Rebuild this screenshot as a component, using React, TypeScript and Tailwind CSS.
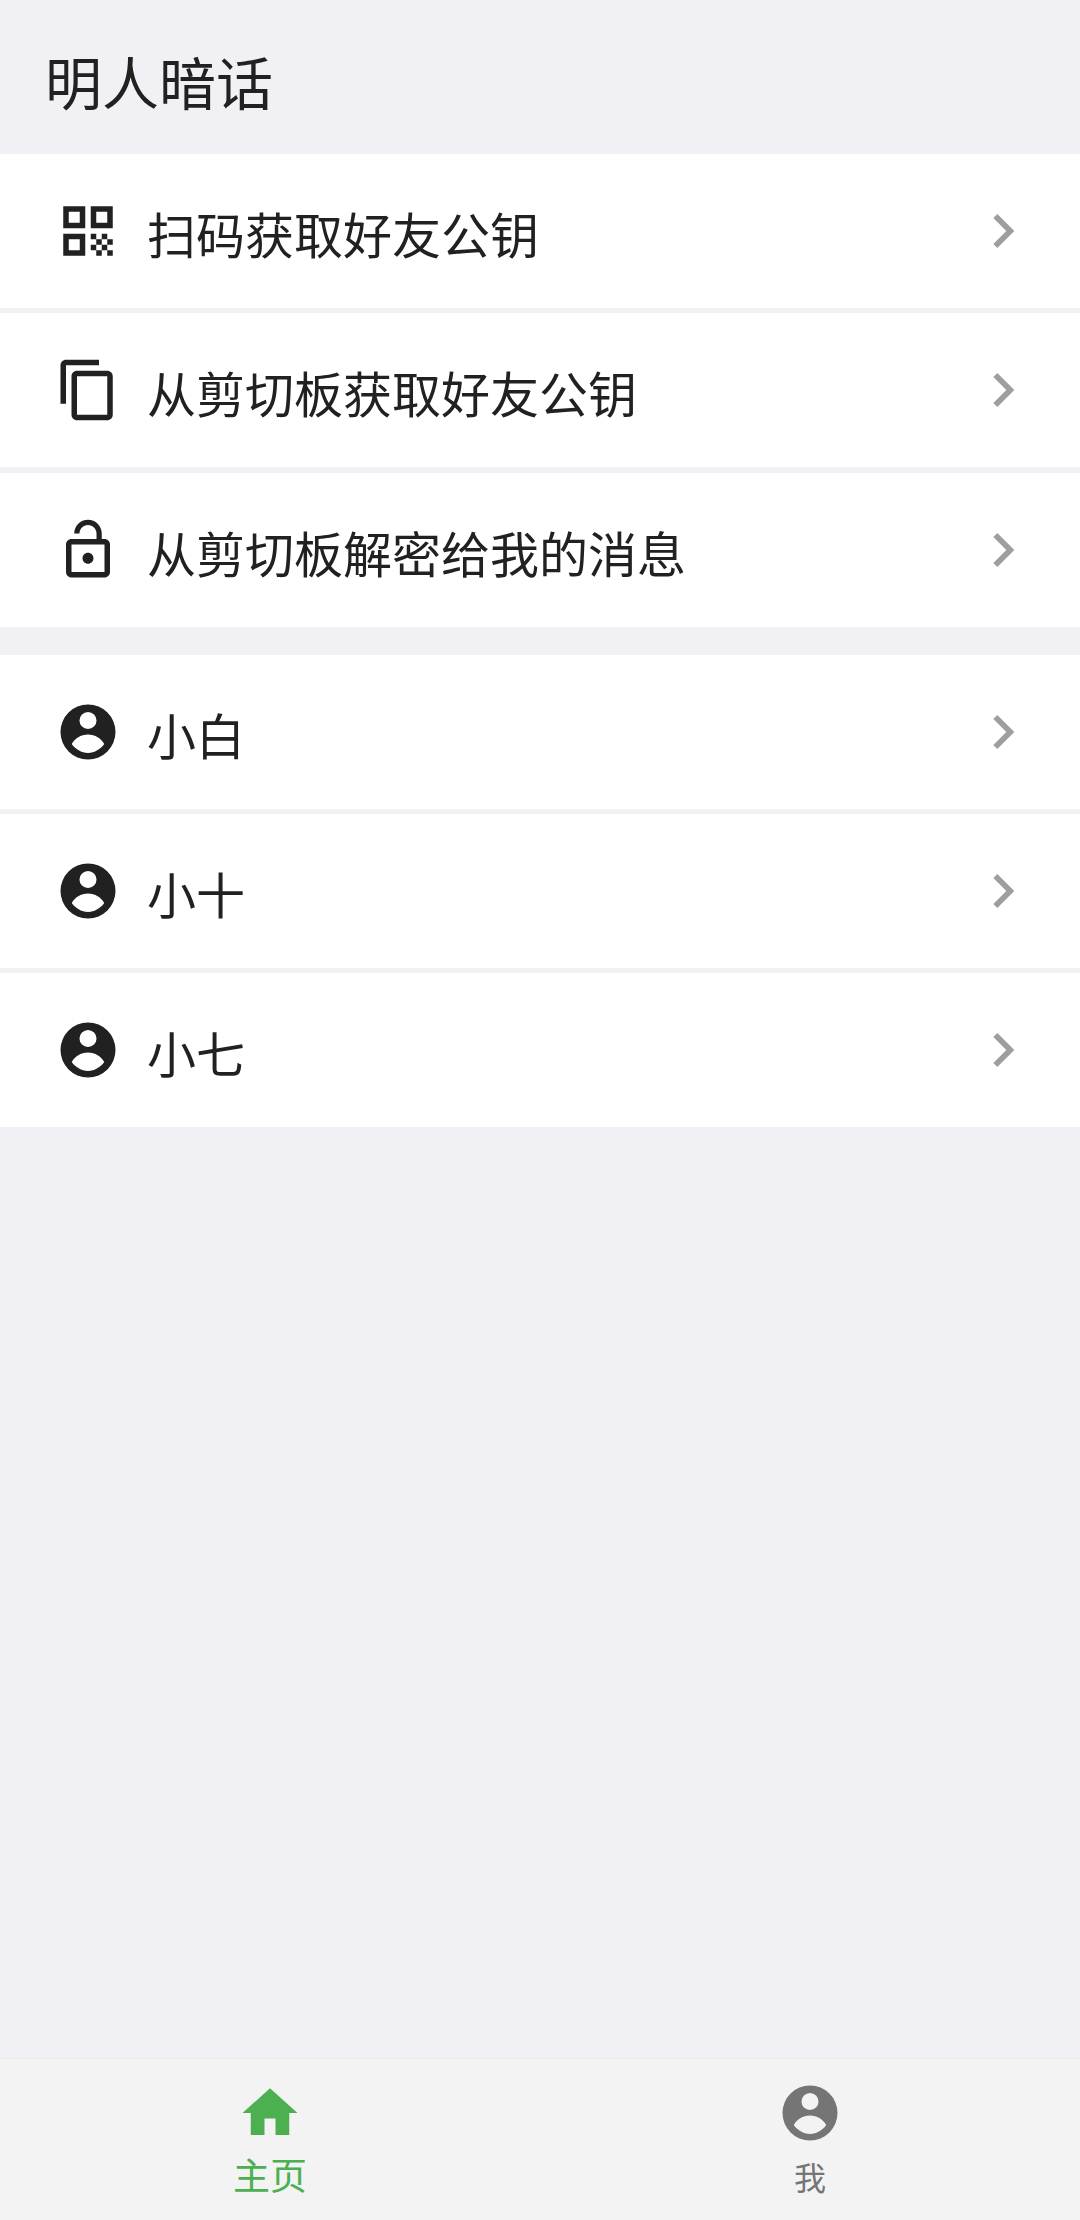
const FONT = "font-['Noto_Sans_CJK_SC','Noto_Sans',sans-serif]";

function Ic({ d, className }: { d: string; className: string }) {
  return (
    <svg viewBox="0 0 24 24" className={className} fill="currentColor" fillRule="evenodd">
      <path d={d} />
    </svg>
  );
}

const QR =
  "M3 3h8v8H3zM5 5v4h4V5zM13 3h8v8h-8zM15 5v4h4V5zM3 13h8v8H3zM5 15v4h4v-4zM13 13h2v2h-2zM17 13h2v2h-2zM15 15h2v2h-2zM19 15h2v2h-2zM13 17h2v2h-2zM17 17h2v2h-2zM15 19h2v2h-2zM19 19h2v2h-2z";
const COPY =
  "M16 1H4c-1.1 0-2 .9-2 2v14h2V3h12V1zm3 4H8c-1.1 0-2 .9-2 2v14c0 1.1.9 2 2 2h11c1.1 0 2-.9 2-2V7c0-1.1-.9-2-2-2zm0 16H8V7h11v14z";
const LOCK =
  "M12 17c1.1 0 2-.9 2-2s-.9-2-2-2-2 .9-2 2 .9 2 2 2zm6-9h-1V6c0-2.76-2.24-5-5-5S7 3.24 7 6h1.9c0-1.71 1.39-3.1 3.1-3.1 1.71 0 3.1 1.39 3.1 3.1v2H6c-1.1 0-2 .9-2 2v10c0 1.1.9 2 2 2h12c1.1 0 2-.9 2-2V10c0-1.1-.9-2-2-2zm0 12H6V10h12v10z";
const USER =
  "M12 2a10 10 0 1 0 0 20a10 10 0 0 0 0-20zM12 4.7a3.1 3.1 0 1 1 0 6.2a3.1 3.1 0 0 1 0-6.2zM12 12.9c2.6 0 4.8 1.4 5.9 3.5c-1.3 1.9-3.5 3.2-5.9 3.2s-4.6-1.3-5.9-3.2c1.1-2.1 3.3-3.5 5.9-3.5z";
const HOME = "M10 20v-6h4v6h5v-8h3L12 3 2 12h3v8z";
const CHEV = "M10 6L8.59 7.41 13.17 12l-4.58 4.59L10 18l6-6z";

function Row({ icon, label }: { icon: string; label: string }) {
  return (
    <div className="flex h-[154px] items-center bg-white pl-[55px] pr-[43px]">
      <Ic d={icon} className="h-[66px] w-[66px] shrink-0 text-[#212121]" />
      <span className="ml-[26px] flex-1 pt-[4px] text-[49px] leading-[64px] text-[#212121]">{label}</span>
      <Ic d={CHEV} className="h-[68px] w-[68px] shrink-0 text-[#9e9e9e]" />
    </div>
  );
}

export default function App() {
  return (
    <div className={`flex h-[2220px] w-[1080px] flex-col bg-[#f1f1f5] ${FONT}`}>
      <div className="flex h-[154px] items-center pl-[45px] pt-[6px] text-[57px] leading-[80px] text-[#212121]">明人暗话</div>
      <div className="flex flex-col gap-[5.33px]">
        <Row icon={QR} label="扫码获取好友公钥" />
        <Row icon={COPY} label="从剪切板获取好友公钥" />
        <Row icon={LOCK} label="从剪切板解密给我的消息" />
      </div>
      <div className="mt-[28px] flex flex-col gap-[5.33px]">
        <Row icon={USER} label="小白" />
        <Row icon={USER} label="小十" />
        <Row icon={USER} label="小七" />
      </div>
      <div className="mt-auto flex h-[162px] border-t border-[#ececee] bg-[#f3f3f4]">
        <div className="flex flex-1 flex-col items-center pt-[21px] text-[#4caf50]">
          <Ic d={HOME} className="h-[66px] w-[66px]" />
          <span className="mt-[2px] text-[37px] leading-[52px]">主页</span>
        </div>
        <div className="flex flex-1 flex-col items-center pt-[21px] text-[#757575]">
          <Ic d={USER} className="h-[66px] w-[66px]" />
          <span className="mt-[6px] text-[32px] leading-[48px]">我</span>
        </div>
      </div>
    </div>
  );
}
